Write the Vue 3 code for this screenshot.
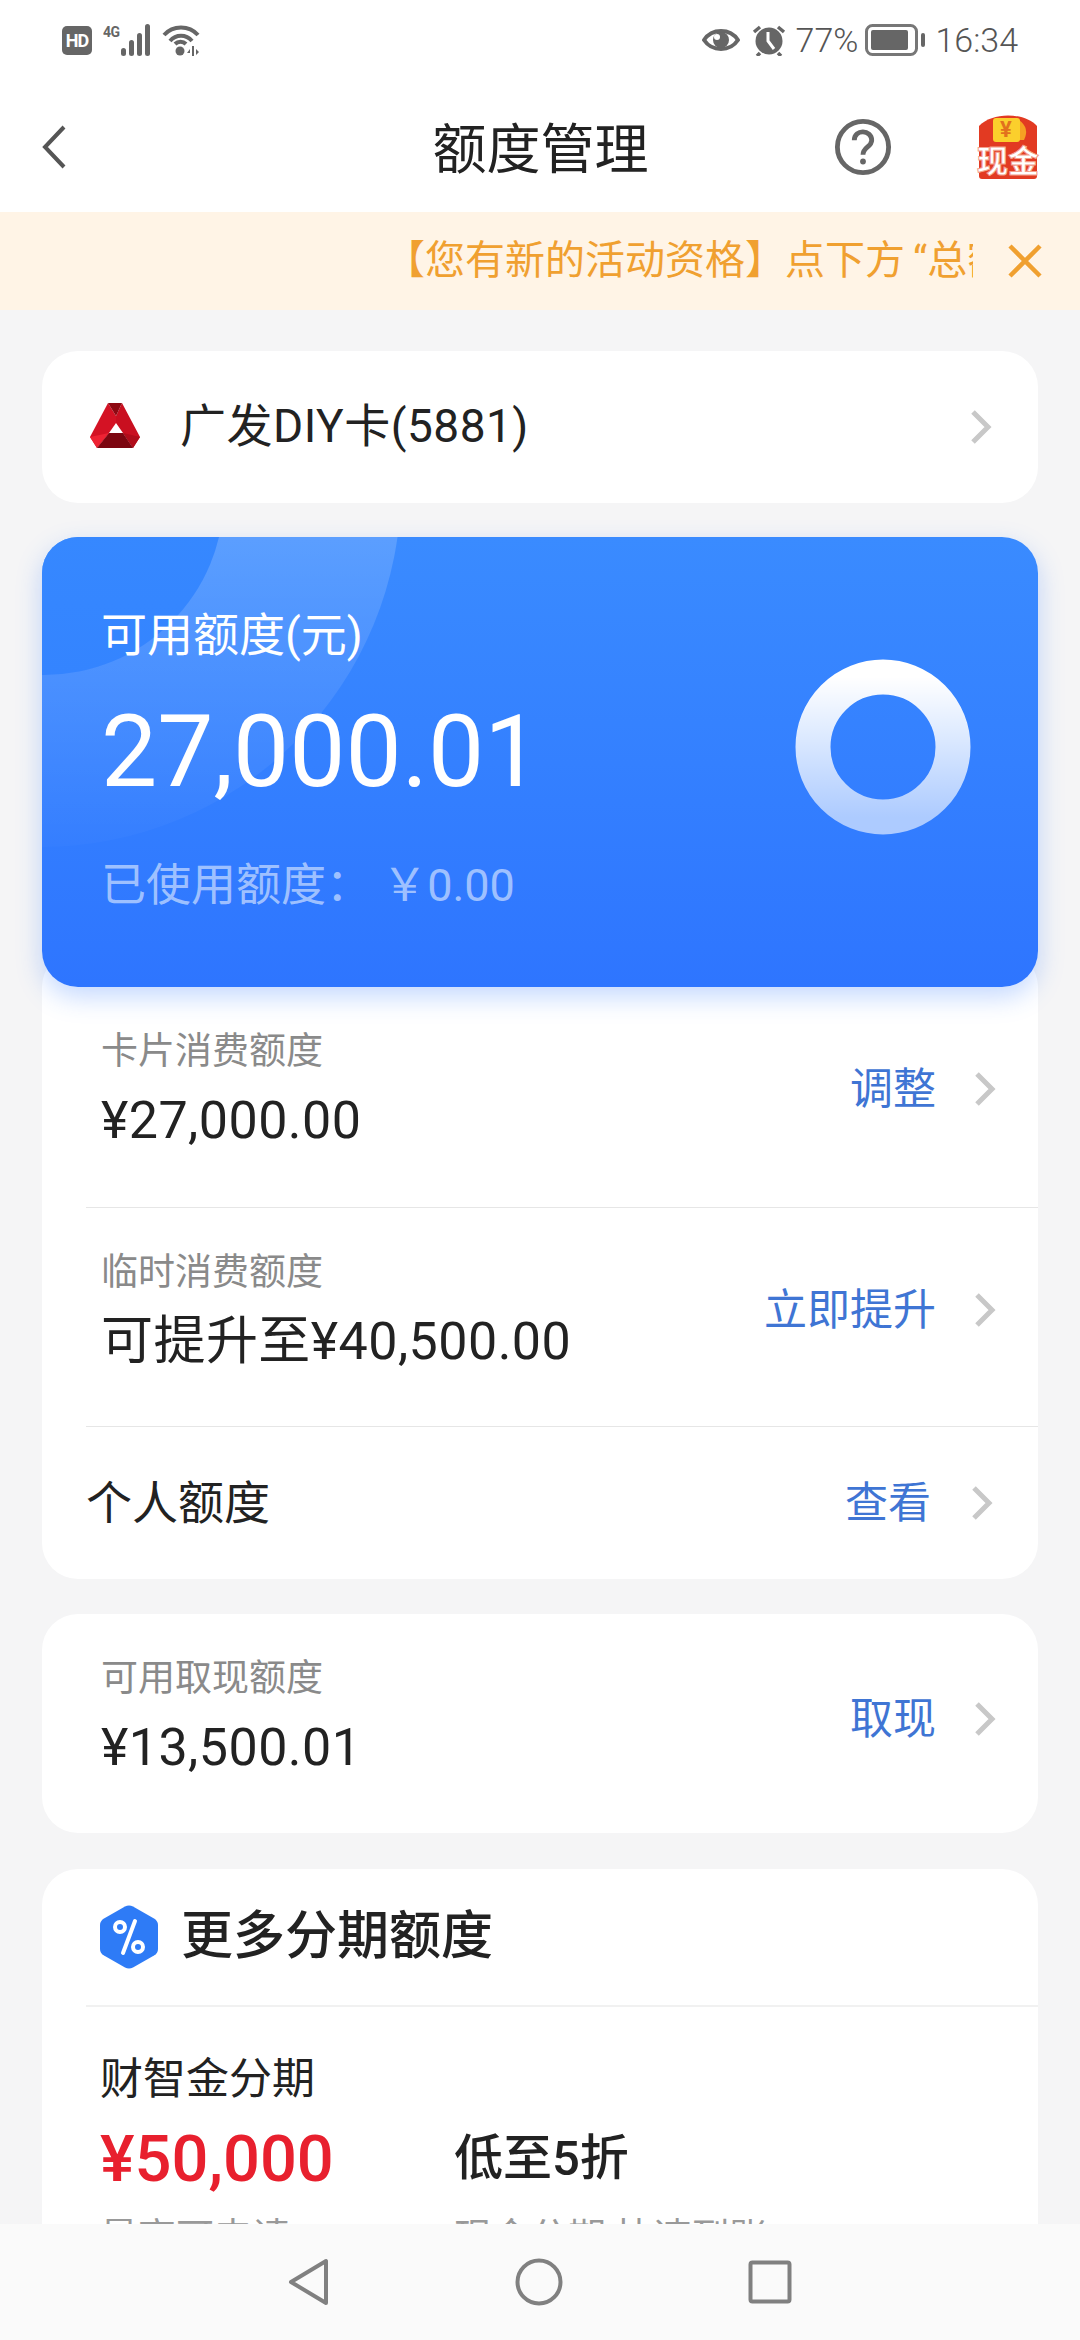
<template>
  <div class="page">
    <div class="status-bar">
      <div class="status-left">
        <span class="hd">HD</span>
        <svg class="signal" width="50" height="32" viewBox="0 0 50 32">
          <text x="0" y="13" class="net">4G</text>
          <rect x="18" y="24" width="5" height="8" rx="2.5" />
          <rect x="26" y="16" width="5" height="16" rx="2.5" />
          <rect x="34" y="9" width="5" height="23" rx="2.5" />
          <rect x="42" y="0" width="5" height="32" rx="2.5" />
        </svg>
        <svg class="wifi" width="38" height="32" viewBox="0 0 38 32">
          <path d="M2 11C11 1 27 1 36 11" />
          <path d="M8 17C14 10 24 10 30 17" />
          <circle cx="18" cy="27" r="4.5" />
          <path d="M13 20C16 17 21 17 24 20" />
          <path class="arrows" d="M28 25l-3 4h3zM30 22h2v10h-2zM34 25v6l3-3z" />
        </svg>
      </div>
      <div class="status-right">
        <svg width="38" height="26" viewBox="0 0 38 26">
          <path class="eye" d="M2 13C10 1 28 1 36 13C28 25 10 25 2 13Z" />
          <circle cx="19" cy="13" r="8" class="solid" />
          <circle cx="15" cy="10" r="3" fill="#fff" />
        </svg>
        <svg width="34" height="32" viewBox="0 0 34 32">
          <circle cx="17" cy="17" r="13.5" class="solid" />
          <path class="clock" d="M16 8v9l6 8" />
          <path class="ears" d="M2 8l6-5M32 8l-6-5M8 29l-3 3M26 29l3 3" />
        </svg>
        <span class="battery-text">77%</span>
        <svg width="62" height="32" viewBox="0 0 62 32">
          <rect x="1.5" y="1.5" width="50" height="29" rx="6" class="battery" />
          <rect x="6" y="6" width="37" height="20" rx="2" class="solid" />
          <rect x="56" y="9" width="4" height="14" rx="2" class="solid" />
        </svg>
        <span class="clock-text">16:34</span>
      </div>
    </div>

    <div class="nav-bar">
      <svg class="back" width="26" height="46" viewBox="0 0 26 46">
        <path d="M23 3L4 23L23 43" />
      </svg>
      <div class="nav-title">额度管理</div>
      <div class="nav-actions">
        <svg class="help" width="58" height="58" viewBox="0 0 60 60">
          <circle cx="30" cy="30" r="26.5" />
          <path d="M21 23C21 11 39 12 39 23C39 30 30 30 30 38" />
          <circle class="dot" cx="30" cy="45" r="3" />
        </svg>
        <svg class="packet" width="64" height="66" viewBox="0 0 64 66">
          <path d="M3 12C16 -2 48 -2 61 12V62Q61 65 58 65H6Q3 65 3 62Z" fill="#e23a22" />
          <path d="M43 6Q54 14 48 26H40Z" fill="#f6a023" />
          <path d="M20 4H41Q44 4 44 7V25Q44 28 41 28H20Q17 28 17 25V7Q17 4 20 4Z" fill="#fbcf2c" />
          <text x="30" y="23" class="packet-yen">¥</text>
          <text x="32" y="58" class="packet-text">现金</text>
        </svg>
      </div>
    </div>

    <div class="notice">
      <div class="notice-text"><span>【您有新的活动资格】点下方<span class="notice-quote">“</span>总额度”</span></div>
      <svg class="notice-close" width="34" height="34" viewBox="0 0 34 34">
        <path d="M2 2L32 32M32 2L2 32" />
      </svg>
    </div>

    <div class="content">
      <div class="card bank-card">
        <svg class="bank-logo" width="50" height="48" viewBox="0 0 50 48">
          <path d="M18 1L26 14V21L19 31L7 46L0 35Z" fill="#d41224" />
          <path d="M32 1L26 14V21L33 31L43 46L50 35Z" fill="#c90f20" />
          <path d="M18 1H32L26 14Z" fill="#8e0812" />
          <path d="M0 35L19 31L7 46Z" fill="#ee2233" />
          <path d="M50 35L33 31L43 46Z" fill="#b00c1a" />
          <path d="M19 31H33L43 46H7Z" fill="#7c0610" />
        </svg>
        <span class="bank-name">广发DIY卡(5881)</span>
        <svg class="arrow bank-arrow" width="24" height="36" viewBox="0 0 24 36">
          <path d="M4 3L19 18L4 33" />
        </svg>
      </div>

      <div class="quota-card">
        <div class="quota-deco quota-deco-outer"></div>
        <div class="quota-deco quota-deco-inner"></div>
        <div class="quota-info">
          <div class="quota-label">可用额度(元)</div>
          <div class="quota-value">27,000.01</div>
          <div class="quota-used">已使用额度： ￥0.00</div>
        </div>
        <svg class="quota-ring" width="176" height="176" viewBox="0 0 176 176">
          <defs>
            <linearGradient id="ringFill" x1="0" y1="0" x2="0" y2="1">
              <stop offset="0" stop-color="#fff" />
              <stop offset="1" stop-color="#fff" stop-opacity="0.6" />
            </linearGradient>
          </defs>
          <circle cx="88" cy="88" r="70" fill="none" stroke="url(#ringFill)" stroke-width="35" />
        </svg>
      </div>

      <div class="card limit-card">
        <div class="limit-row with-line">
          <div>
            <div class="limit-label">卡片消费额度</div>
            <div class="limit-value">¥27,000.00</div>
          </div>
          <div class="limit-action">
            <span>调整</span>
            <svg class="arrow" width="24" height="36" viewBox="0 0 24 36"><path d="M4 3L19 18L4 33" /></svg>
          </div>
        </div>
        <div class="limit-row with-line second">
          <div>
            <div class="limit-label">临时消费额度</div>
            <div class="limit-value">可提升至¥40,500.00</div>
          </div>
          <div class="limit-action">
            <span>立即提升</span>
            <svg class="arrow" width="24" height="36" viewBox="0 0 24 36"><path d="M4 3L19 18L4 33" /></svg>
          </div>
        </div>
        <div class="personal-row">
          <span class="personal-label">个人额度</span>
          <div class="limit-action">
            <span>查看</span>
            <svg class="arrow" width="24" height="36" viewBox="0 0 24 36"><path d="M4 3L19 18L4 33" /></svg>
          </div>
        </div>
      </div>

      <div class="card cash-card">
        <div>
          <div class="limit-label">可用取现额度</div>
          <div class="limit-value">¥13,500.01</div>
        </div>
        <div class="limit-action">
          <span>取现</span>
          <svg class="arrow" width="24" height="36" viewBox="0 0 24 36"><path d="M4 3L19 18L4 33" /></svg>
        </div>
      </div>

      <div class="card more-card">
        <div class="more-head">
          <svg width="58" height="64" viewBox="0 0 58 64">
            <path d="M25 1.5Q29 -0.5 33 1.5L54 13.5Q58 16 58 20V44Q58 48 54 50.5L33 62.5Q29 64.5 25 62.5L4 50.5Q0 48 0 44V20Q0 16 4 13.5Z" fill="#2e7bf6" />
            <circle cx="20" cy="22" r="5" class="pct" />
            <circle cx="38" cy="42" r="5" class="pct" />
            <path d="M35 16L23 48" class="pct" />
          </svg>
          <span class="more-title">更多分期额度</span>
        </div>
        <div class="more-body">
          <div class="more-name">财智金分期</div>
          <div class="more-columns">
            <div class="more-col first">
              <div class="more-amount">¥50,000</div>
              <div class="more-note">最高可申请</div>
            </div>
            <div class="more-col">
              <div class="more-rate">低至5折</div>
              <div class="more-note">现金分期 快速到账</div>
            </div>
          </div>
        </div>
      </div>
    </div>

    <div class="system-nav">
      <svg width="42" height="48" viewBox="0 0 42 48">
        <path d="M38 3V45L3 24Z" />
      </svg>
      <svg width="48" height="48" viewBox="0 0 48 48">
        <circle cx="24" cy="24" r="21.5" />
      </svg>
      <svg width="44" height="44" viewBox="0 0 44 44">
        <rect x="2.5" y="2.5" width="39" height="39" rx="2" />
      </svg>
    </div>
  </div>
</template>

<script setup>
</script>

<style>
body {
  margin: 0;
}
</style>

<style scoped>
.page {
  width: 1080px;
  height: 2340px;
  display: flex;
  flex-direction: column;
  overflow: hidden;
  background: #f5f5f6;
  color: #222;
  font-family: Roboto, "Noto Sans CJK SC", sans-serif;
}

/* status bar */
.status-bar {
  height: 82px;
  flex: none;
  background: #fff;
  display: flex;
  justify-content: space-between;
  align-items: flex-start;
  padding: 24px 62px 0 62px;
  box-sizing: border-box;
  color: #666;
}
.status-left,
.status-right {
  display: flex;
  align-items: center;
  height: 32px;
}
.hd {
  width: 30px;
  height: 29px;
  border-radius: 5px;
  background: #666;
  color: #fff;
  font-size: 18px;
  font-weight: 700;
  line-height: 29px;
  text-align: center;
  letter-spacing: -1px;
}
.signal {
  margin-left: 11px;
  fill: #666;
}
.net {
  font-size: 14px;
  font-weight: 700;
  letter-spacing: -0.5px;
}
.wifi {
  margin-left: 9px;
  fill: none;
  stroke: #666;
  stroke-width: 4;
}
.wifi circle,
.wifi .arrows {
  fill: #666;
  stroke: none;
}
.status-right svg {
  flex: none;
}
.status-right {
  gap: 12px;
}
.solid {
  fill: #666;
}
.eye {
  fill: none;
  stroke: #666;
  stroke-width: 4;
  stroke-linejoin: round;
}
.clock {
  fill: none;
  stroke: #fff;
  stroke-width: 3;
}
.ears {
  fill: none;
  stroke: #666;
  stroke-width: 3.5;
}
.battery {
  fill: none;
  stroke: #777;
  stroke-width: 3;
}
.battery-text,
.clock-text {
  font-size: 34px;
  font-weight: 300;
  line-height: 32px;
  color: #555;
}
.battery-text {
  margin-left: -2px;
  margin-right: -5px;
}
.clock-text {
  margin-left: -4px;
}

/* nav */
.nav-bar {
  height: 130px;
  flex: none;
  background: #fff;
  display: grid;
  grid-template-columns: 1fr auto 1fr;
  align-items: center;
  padding: 0 40px 0 41px;
  box-sizing: border-box;
}
.back {
  fill: none;
  stroke: #555;
  stroke-width: 4;
}
.nav-title {
  font-size: 54px;
  line-height: 80px;
  padding-top: 8px;
  color: #222;
}
.nav-actions {
  display: flex;
  justify-content: flex-end;
  align-items: center;
  gap: 84px;
}
.help {
  fill: none;
  stroke: #666;
  stroke-width: 5;
}
.help .dot {
  fill: #666;
  stroke: none;
}
.packet-yen {
  font-size: 22px;
  font-weight: 700;
  fill: #e2711d;
  text-anchor: middle;
}
.packet-text {
  font-size: 31px;
  font-weight: 700;
  fill: #fff;
  text-anchor: middle;
  stroke: #f3a08c;
  stroke-width: 1;
}

/* notice */
.notice {
  height: 98px;
  flex: none;
  background: #fff4e6;
  display: flex;
  align-items: center;
  justify-content: flex-end;
  padding-right: 38px;
  gap: 35px;
}
.notice-text {
  width: 588px;
  overflow: hidden;
  white-space: nowrap;
  font-size: 40px;
  line-height: 56px;
  color: #f0a030;
}
.notice-quote {
  margin-left: 8px;
}
.notice-close {
  fill: none;
  stroke: #f0a030;
  stroke-width: 4.5;
}

/* cards */
.content {
  flex: 1;
  overflow: hidden;
  padding: 41px 42px 0;
}
.card {
  background: #fff;
  border-radius: 36px;
}
.bank-card {
  height: 152px;
  display: flex;
  align-items: center;
  padding: 0 45px 0 48px;
  box-sizing: border-box;
}
.bank-logo {
  margin-bottom: 2px;
}
.bank-name {
  flex: 1;
  margin-left: 40px;
  margin-bottom: 2px;
  font-size: 46px;
  letter-spacing: 0.5px;
  line-height: 60px;
}
.arrow {
  flex: none;
  fill: none;
  stroke: #c8c8c8;
  stroke-width: 5;
}

.quota-card {
  position: relative;
  z-index: 1;
  margin-top: 34px;
  height: 450px;
  border-radius: 36px;
  overflow: hidden;
  background: linear-gradient(180deg, #3a8bff 0%, #2e75ff 100%);
  box-shadow: 0 10px 26px rgba(46, 117, 255, 0.28);
  display: flex;
  justify-content: space-between;
  align-items: center;
  padding: 0 67px 0 59px;
  box-sizing: border-box;
  color: #fff;
}
.quota-deco {
  position: absolute;
  border-radius: 50%;
}
.quota-deco-inner {
  width: 360px;
  height: 360px;
  left: -178px;
  top: -222px;
  background: linear-gradient(180deg, #3688ff 60%, #3484ff 100%);
}
.quota-deco-outer {
  width: 720px;
  height: 720px;
  left: -361px;
  top: -410px;
  background: linear-gradient(180deg, rgba(255, 255, 255, 0.17) 57%, rgba(255, 255, 255, 0.015) 100%);
}
.quota-info {
  position: relative;
  padding-bottom: 3px;
}
.quota-label {
  font-size: 46px;
  line-height: 60px;
}
.quota-value {
  margin-top: 27px;
  font-size: 100px;
  line-height: 120px;
}
.quota-used {
  margin-top: 44px;
  font-size: 45px;
  line-height: 60px;
  color: rgba(255, 255, 255, 0.55);
}
.quota-ring {
  position: relative;
  margin-bottom: 30px;
}

.limit-card {
  margin-top: -36px;
  padding-top: 36px;
}
.limit-row {
  margin-left: 44px;
  padding: 40px 41px 51px 15px;
  display: flex;
  justify-content: space-between;
  align-items: center;
}
.limit-row.second {
  padding-bottom: 49px;
}
.limit-row .limit-action {
  margin-bottom: 6px;
}
.with-line {
  border-bottom: 1px solid #e6e6e6;
}
.limit-label {
  font-size: 37px;
  line-height: 50px;
  color: #8a8a8a;
}
.limit-value {
  margin-top: 9px;
  font-size: 52px;
  letter-spacing: 0.45px;
  line-height: 70px;
  color: #222;
}
.limit-action {
  display: flex;
  align-items: center;
  gap: 37px;
  font-size: 43px;
  line-height: 56px;
  color: #3f75d4;
}
.personal-row {
  height: 152px;
  margin-left: 44px;
  padding: 0 44px 0 0;
  display: flex;
  justify-content: space-between;
  align-items: center;
}
.personal-row .limit-action {
  gap: 39px;
}
.personal-label {
  font-size: 46px;
  line-height: 60px;
  color: #222;
}

.cash-card {
  margin-top: 35px;
  padding: 40px 41px 50px 59px;
  display: flex;
  justify-content: space-between;
  align-items: center;
}

.more-card {
  margin-top: 36px;
  height: 420px;
}
.more-head {
  height: 136px;
  margin-left: 44px;
  padding-left: 14px;
  display: flex;
  align-items: center;
  gap: 23px;
  border-bottom: 2px solid #f1f1f1;
}
.pct {
  fill: none;
  stroke: #fff;
  stroke-width: 4;
  stroke-linecap: round;
}
.more-title {
  font-size: 52px;
  font-weight: 500;
  line-height: 70px;
}
.more-body {
  padding: 42px 0 0 58px;
}
.more-name {
  font-size: 43px;
  line-height: 60px;
}
.more-columns {
  display: flex;
  margin-top: 10px;
}
.more-col.first {
  width: 354px;
}
.more-amount {
  font-size: 65px;
  font-weight: 500;
  line-height: 80px;
  color: #e8202e;
}
.more-rate {
  font-size: 49px;
  font-weight: 500;
  line-height: 80px;
}
.more-note {
  margin-top: 13px;
  font-size: 38px;
  line-height: 50px;
  color: #999;
}

/* system nav */
.system-nav {
  height: 116px;
  flex: none;
  background: #fafafa;
  display: flex;
  align-items: center;
  justify-content: center;
  gap: 185px;
  position: relative;
}
.system-nav svg {
  fill: none;
  stroke: #808080;
  stroke-width: 4;
  stroke-linejoin: round;
}
</style>
